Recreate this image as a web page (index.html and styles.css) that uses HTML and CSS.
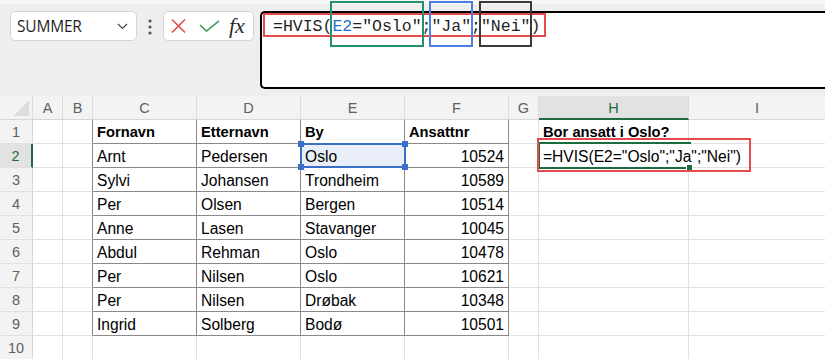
FILE: index.html
```html
<!DOCTYPE html>
<html>
<head>
  <title>Excel - HVIS</title>
  <link rel="stylesheet" href="styles.css">
</head>
<body>
  <div class="toolbar">
    <div class="namebox">
      <span>SUMMER</span>
      <svg class="chev" width="11" height="7" viewBox="0 0 11 7"><path d="M1 1 L5.5 5.5 L10 1" fill="none" stroke="#444" stroke-width="1.2"/></svg>
    </div>
    <svg class="dots" width="4" height="16" viewBox="0 0 4 16"><circle cx="2" cy="2" r="1.6" fill="#555"/><circle cx="2" cy="8" r="1.6" fill="#555"/><circle cx="2" cy="14" r="1.6" fill="#555"/></svg>
    <div class="btns">
      <svg width="15" height="14" viewBox="0 0 15 14"><path d="M1 0.5 L14 13.5 M14 0.5 L1 13.5" stroke="#e04848" stroke-width="1.5" fill="none"/></svg>
      <svg class="ok" width="21" height="12" viewBox="0 0 21 12"><path d="M1 5 L7.5 11 L20 0.8" stroke="#3a9d56" stroke-width="1.6" fill="none"/></svg>
      <span class="fx">fx</span>
    </div>
    <div class="fbar">
      <div class="ftext">=HVIS(<span class="mark green"><span class="ref">E2</span>="Oslo"</span>;<span class="mark blue">"Ja"</span>;<span class="mark black">"Nei"</span>)</div>
    </div>
  </div>

  <div class="sheet">
    <div class="h corner"></div>
    <div class="h">A</div><div class="h">B</div><div class="h">C</div><div class="h">D</div>
    <div class="h">E</div><div class="h">F</div><div class="h">G</div><div class="h on">H</div><div class="h">I</div>

    <div class="r">1</div><div class="c"></div><div class="c tl"></div>
    <div class="c t b">Fornavn</div><div class="c t b">Etternavn</div><div class="c t b">By</div><div class="c t b">Ansattnr</div>
    <div class="c"></div><div class="c b">Bor ansatt i Oslo?</div><div class="c"></div>

    <div class="r on">2</div><div class="c"></div><div class="c tl"></div>
    <div class="c t">Arnt</div><div class="c t">Pedersen</div>
    <div class="c t range">Oslo<span class="rng"><i class="k k1"></i><i class="k k2"></i><i class="k k3"></i><i class="k k4"></i></span></div>
    <div class="c t n">10524</div>
    <div class="c"></div>
    <div class="c sel">=HVIS(E2="Oslo";"Ja";"Nei")<span class="cur"></span><span class="note"></span></div>
    <div class="c"></div>

    <div class="r">3</div><div class="c"></div><div class="c tl"></div>
    <div class="c t">Sylvi</div><div class="c t">Johansen</div><div class="c t">Trondheim</div><div class="c t n">10589</div>
    <div class="c"></div><div class="c"></div><div class="c"></div>

    <div class="r">4</div><div class="c"></div><div class="c tl"></div>
    <div class="c t">Per</div><div class="c t">Olsen</div><div class="c t">Bergen</div><div class="c t n">10514</div>
    <div class="c"></div><div class="c"></div><div class="c"></div>

    <div class="r">5</div><div class="c"></div><div class="c tl"></div>
    <div class="c t">Anne</div><div class="c t">Lasen</div><div class="c t">Stavanger</div><div class="c t n">10045</div>
    <div class="c"></div><div class="c"></div><div class="c"></div>

    <div class="r">6</div><div class="c"></div><div class="c tl"></div>
    <div class="c t">Abdul</div><div class="c t">Rehman</div><div class="c t">Oslo</div><div class="c t n">10478</div>
    <div class="c"></div><div class="c"></div><div class="c"></div>

    <div class="r">7</div><div class="c"></div><div class="c tl"></div>
    <div class="c t">Per</div><div class="c t">Nilsen</div><div class="c t">Oslo</div><div class="c t n">10621</div>
    <div class="c"></div><div class="c"></div><div class="c"></div>

    <div class="r">8</div><div class="c"></div><div class="c tl"></div>
    <div class="c t">Per</div><div class="c t">Nilsen</div><div class="c t">Drøbak</div><div class="c t n">10348</div>
    <div class="c"></div><div class="c"></div><div class="c"></div>

    <div class="r">9</div><div class="c"></div><div class="c tl"></div>
    <div class="c t">Ingrid</div><div class="c t">Solberg</div><div class="c t">Bodø</div><div class="c t n">10501</div>
    <div class="c"></div><div class="c"></div><div class="c"></div>

    <div class="r">10</div><div class="c"></div><div class="c"></div>
    <div class="c"></div><div class="c"></div><div class="c"></div><div class="c"></div>
    <div class="c"></div><div class="c"></div><div class="c"></div>
  </div>
</body>
</html>
```

FILE: styles.css
```css
body {
  margin: 0;
  overflow: hidden;
  background-color: #fff;
  font-family: 'Liberation Sans', Arial, sans-serif;
  color: #000;
}

/* formula toolbar */
.toolbar {
  display: flex;
  align-items: flex-start;
  height: 96px;
  box-sizing: border-box;
  padding: 11px 0 0 10px;
  background: linear-gradient(#f8f8f8 0, #f8f8f8 3px, #eeeeee 5px);
}
.namebox {
  display: flex;
  align-items: center;
  justify-content: space-between;
  width: 127px;
  height: 30px;
  box-sizing: border-box;
  padding: 0 8px 0 6px;
  background-color: #fff;
  border: 1px solid #d4d4d4;
  border-radius: 5px;
  font-family: 'Open Sans', sans-serif;
  font-size: 15.5px;
  letter-spacing: -0.2px;
  color: #1f1f1f;
}
.chev {
  margin-top: 1px;
}
.dots {
  margin: 8px 0 0 11px;
}
.btns {
  display: flex;
  align-items: center;
  width: 91px;
  height: 30px;
  box-sizing: border-box;
  margin-left: 11px;
  padding-left: 7px;
  background-color: #fff;
  border: 1px solid #d4d4d4;
  border-radius: 5px;
}
.btns .ok {
  margin-left: 13px;
}
.fx {
  margin-left: 9px;
  font-family: 'Liberation Serif', serif;
  font-style: italic;
  font-size: 22px;
  color: #2b2b2b;
  line-height: 20px;
}
.fbar {
  flex: 1;
  height: 78px;
  box-sizing: border-box;
  margin-left: 6px;
  background-color: #fff;
  border: 2px solid #000;
  border-right: 0;
  border-radius: 5px 0 0 5px;
}
.ftext {
  display: inline-block;
  height: 24px;
  box-sizing: border-box;
  margin-left: 1px;
  padding: 4px 4px 0 8px;
  border: 2px solid #e44b4b;
  font-family: 'Liberation Mono', monospace;
  font-size: 16.5px;
  line-height: 16px;
  color: #1f1f1f;
  white-space: nowrap;
}
.ref {
  color: #1f6fc8;
}
.mark {
  position: relative;
}
.mark::after {
  content: '';
  position: absolute;
  left: -2px;
  right: -2px;
  top: -16px;
  bottom: -11px;
  border: 2px solid;
}
.green::after { border-color: #23916a; }
.blue::after { border-color: #4a7fe3; }
.black::after { border-color: #3a3a3a; }

/* grid */
.sheet {
  display: grid;
  grid-template-columns: 33px 30px 30px 104px 104px 104px 104px 30px 150px 1fr;
  grid-auto-rows: 24px;
}
.sheet > div:nth-child(10n) {
  border-right: 0;
}
.h, .r {
  background-color: #f3f3f3;
  color: #616161;
  font-size: 14.5px;
  text-align: center;
  line-height: 24px;
  box-sizing: border-box;
}
.h {
  border-right: 1px solid #dcdcdc;
  border-bottom: 1px solid #d6d6d6;
  padding-top: 1px;
  line-height: 22px;
}
.r {
  border-right: 1px solid #d6d6d6;
  border-bottom: 1px solid #e1e1e1;
  padding-top: 1px;
  line-height: 23px;
}
.corner {
  background: #f3f3f3 linear-gradient(to top left, #dcdcdc 50%, transparent 50%) no-repeat;
  background-size: 15px 15px;
  background-position: right 3px bottom 3px;
}
.h.on {
  background-color: #e2e2e2;
  color: #1e6b41;
  border-bottom: 2px solid #1e6b41;
}
.r.on {
  background-color: #e2e2e2;
  color: #1e6b41;
  border-right: 2px solid #1e6b41;
}
.c {
  box-sizing: border-box;
  padding: 1px 4px 0;
  border-right: 1px solid #e1e1e1;
  border-bottom: 1px solid #e1e1e1;
  font-size: 15.6px;
  line-height: 23px;
  white-space: nowrap;
}
.c.t {
  border-right-color: #8a8a8a;
  border-bottom-color: #8a8a8a;
}
.c.tl {
  border-right-color: #8a8a8a;
}
.c.b {
  font-weight: bold;
  font-size: 14.7px;
}
.c.n {
  text-align: right;
}
.range {
  position: relative;
  background-color: #e9eef8;
}
.rng {
  position: absolute;
  left: -1px;
  top: -1px;
  width: 106px;
  height: 25px;
  box-sizing: border-box;
  border: 2px solid #3a6fc7;
}
.k {
  position: absolute;
  width: 6px;
  height: 6px;
  background-color: #3a6fc7;
}
.k1 { left: -4px; top: -4px; }
.k2 { right: -4px; top: -4px; }
.k3 { left: -4px; bottom: -4px; }
.k4 { right: -4px; bottom: -4px; }

.sel {
  position: relative;
  border-right: 0;
}
.cur {
  position: absolute;
  left: -1px;
  top: -2px;
  width: 153px;
  height: 27px;
  box-sizing: border-box;
  border: 2px solid #1e6b41;
  border-right: 0;
}
.cur::after {
  content: '';
  position: absolute;
  right: -2px;
  bottom: -4px;
  width: 5px;
  height: 5px;
  background-color: #1e6b41;
  border: 1px solid #fff;
}
.note {
  position: absolute;
  left: -2px;
  top: -6px;
  width: 214px;
  height: 34px;
  box-sizing: border-box;
  border: 2px solid #e44b4b;
}
```
